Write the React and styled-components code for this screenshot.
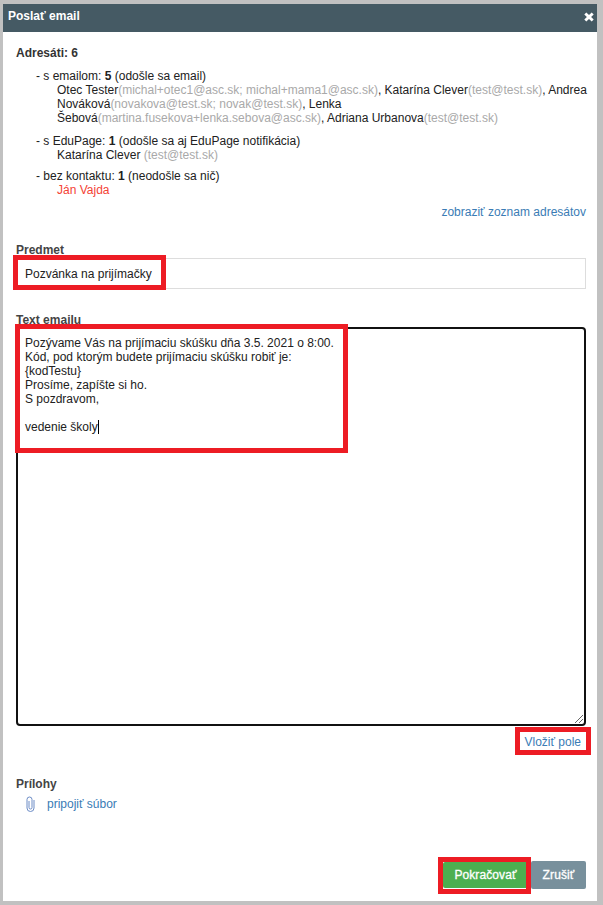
import React from "react";
import styled, { createGlobalStyle } from "styled-components";

const Global = createGlobalStyle`
  html, body { margin: 0; padding: 0; background: #c1c1c1; }
  body { font-family: "Liberation Sans", Arial, sans-serif; font-size: 12px; color: #212121; }
`;

const Page = styled.div`
  position: relative;
  width: 603px;
  height: 905px;
  padding: 4px 6px 4px 3px;
  box-sizing: border-box;
  overflow: hidden;
`;

const Modal = styled.div`
  height: 897px;
  background: #fff;
  display: flex;
  flex-direction: column;
`;

const Header = styled.div`
  height: 28px;
  flex: none;
  background: #455a64;
  color: #fff;
  font-weight: bold;
  font-size: 12px;
  display: flex;
  align-items: center;
  justify-content: space-between;
  padding: 0 3px 5px 5px;
  box-sizing: border-box;
`;

const Close = styled.svg`
  width: 10px;
  height: 10px;
  margin-top: 3px;
`;

const Body = styled.div`
  flex: 1;
  display: flex;
  flex-direction: column;
  padding: 14px 11px 12px 13px;
  min-height: 0;
`;

const Title = styled.div`
  font-weight: bold;
  line-height: 14px;
  color: #333;
`;

const Group = styled.div`
  margin: ${(p) => p.$top}px 0 0 20px;
  line-height: 14px;
`;

const Names = styled.div`
  padding-left: 21px;
  color: ${(p) => (p.$red ? "#f44336" : "inherit")};
  white-space: nowrap;
`;

const Gray = styled.span`
  color: #a9a9a9;
`;

const LinkRow = styled.div`
  display: flex;
  justify-content: flex-end;
  line-height: 14px;
  margin-top: ${(p) => p.$top}px;
  padding-right: ${(p) => p.$right || 0}px;
`;

const Link = styled.a`
  color: #3a7cb5;
  cursor: pointer;
`;

const Label = styled.div`
  font-weight: bold;
  color: #444;
  line-height: 14px;
  margin-top: ${(p) => p.$top}px;
`;

const Subject = styled.div`
  height: 31px;
  margin-top: 1px;
  border: 1px solid #ddd;
  box-sizing: border-box;
  padding: 0 8px;
  display: flex;
  align-items: center;
  color: #212121;
`;

const TextArea = styled.div`
  position: relative;
  height: 399px;
  border: 2px solid #111;
  border-radius: 4px;
  box-sizing: border-box;
  padding: 7px 7px;
  line-height: 14px;
  color: #212121;
`;

const Line = styled.div`
  min-height: 14px;
`;

const Caret = styled.span`
  display: inline-block;
  width: 1px;
  height: 14px;
  background: #000;
  vertical-align: top;
`;

const Grip = styled.svg`
  position: absolute;
  right: 0;
  bottom: 0;
  width: 10px;
  height: 10px;
`;

const Attach = styled.div`
  display: flex;
  align-items: center;
  line-height: 14px;
  margin-top: 5px;
  padding-left: 10px;
  gap: 12px;
`;

const Clip = styled.svg`
  width: 9px;
  height: 16px;
  flex: none;
`;

const Footer = styled.div`
  margin-top: auto;
  display: flex;
  justify-content: flex-end;
  align-items: center;
`;

const Button = styled.div`
  height: ${(p) => p.$h}px;
  width: ${(p) => p.$w}px;
  margin-right: ${(p) => p.$gap || 0}px;
  display: flex;
  align-items: center;
  justify-content: center;
  color: #fff;
  letter-spacing: 0.1px;
  -webkit-text-stroke: 0.3px #fff;
  background: ${(p) => p.$bg};
  border-radius: 2px;
`;

const Highlight = styled.div`
  position: absolute;
  left: ${(p) => p.$x}px;
  top: ${(p) => p.$y}px;
  width: ${(p) => p.$w}px;
  height: ${(p) => p.$h}px;
  box-sizing: border-box;
  border: 5px solid #ed1c24;
  pointer-events: none;
`;

export default function App() {
  return (
    <Page>
      <Global />
      <Modal>
        <Header>
          <span>Poslať email</span>
          <Close viewBox="0 0 10 10">
            <path d="M2.300 .4 5 3 7.700 .4 9.700 2.400 7.100 5 9.700 7.600 7.700 9.600 5 7 2.300 9.600 .3 7.600 2.900 5 .3 2.400Z" fill="#fff" />
          </Close>
        </Header>
        <Body>
          <Title>Adresáti: 6</Title>
          <Group $top={9}>
            - s emailom: <b>5</b> (odošle sa email)
            <Names>
              Otec Tester<Gray>(michal+otec1@asc.sk; michal+mama1@asc.sk)</Gray>, Katarína Clever<Gray>(test@test.sk)</Gray>, Andrea
              <br />
              Nováková<Gray>(novakova@test.sk; novak@test.sk)</Gray>, Lenka
              <br />
              Šebová<Gray>(martina.fusekova+lenka.sebova@asc.sk)</Gray>, Adriana Urbanova<Gray>(test@test.sk)</Gray>
            </Names>
          </Group>
          <Group $top={9}>
            - s EduPage: <b>1</b> (odošle sa aj EduPage notifikácia)
            <Names>
              Katarína Clever <Gray>(test@test.sk)</Gray>
            </Names>
          </Group>
          <Group $top={7}>
            - bez kontaktu: <b>1</b> (neodošle sa nič)
            <Names $red>Ján Vajda</Names>
          </Group>
          <LinkRow $top={8}>
            <Link>zobraziť zoznam adresátov</Link>
          </LinkRow>
          <Label $top={24}>Predmet</Label>
          <Subject>Pozvánka na prijímačky</Subject>
          <Label $top={24}>Text emailu</Label>
          <TextArea>
            <Line>Pozývame Vás na prijímaciu skúšku dňa 3.5. 2021 o 8:00.</Line>
            <Line>Kód, pod ktorým budete prijímaciu skúšku robiť je:</Line>
            <Line>{"{kodTestu}"}</Line>
            <Line>Prosíme, zapíšte si ho.</Line>
            <Line>S pozdravom,</Line>
            <Line />
            <Line>
              vedenie školy
              <Caret />
            </Line>
            <Grip viewBox="0 0 10 10">
              <path d="M1 9 9 1M5 9 9 5" stroke="#666" strokeWidth="1" fill="none" />
            </Grip>
          </TextArea>
          <LinkRow $top={9} $right={5}>
            <Link>Vložiť pole</Link>
          </LinkRow>
          <Label $top={28}>Prílohy</Label>
          <Attach>
            <Clip viewBox="0 0 9 16">
              <path
                d="M3 5V11.500A1.500 1.500 0 0 0 6 11.500V3.500A2.500 2.500 0 0 0 1 3.500V12A3.500 3.500 0 0 0 8 12V4"
                fill="none"
                stroke="#6c8cc6"
                strokeWidth="1"
              />
            </Clip>
            <Link>pripojiť súbor</Link>
          </Attach>
          <Footer>
            <Button $bg="#4caf50" $w={85} $h={26} $gap={3}>Pokračovať</Button>
            <Button $bg="#78909c" $w={55} $h={28}>Zrušiť</Button>
          </Footer>
        </Body>
      </Modal>
      <Highlight $x={13} $y={255} $w={153} $h={35} />
      <Highlight $x={15} $y={324} $w={333} $h={129} />
      <Highlight $x={515} $y={727} $w={76} $h={28} />
      <Highlight $x={438} $y={857} $w={93} $h={37} />
    </Page>
  );
}
